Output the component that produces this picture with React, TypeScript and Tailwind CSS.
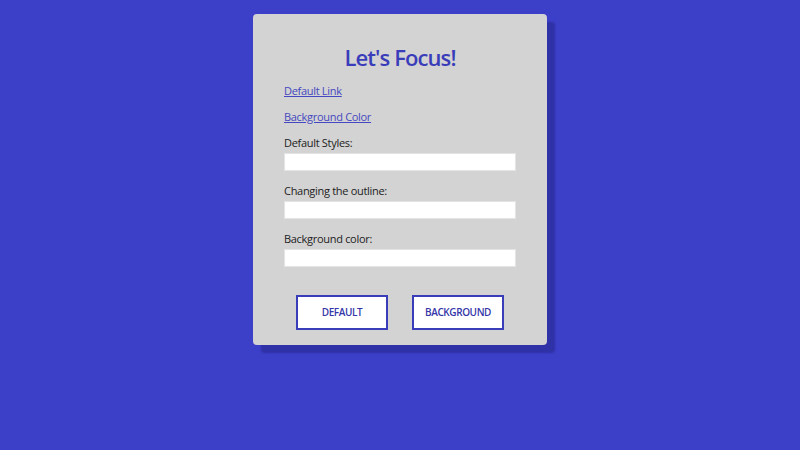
import React from "react";

const font = { fontFamily: '"Open Sans", "Noto Sans", sans-serif' };

function Field({ label }: { label: string }) {
  return (
    <div className="flex flex-col">
      <label className="text-[11px] leading-[17px] tracking-[-0.3px] text-[#222]">{label}</label>
      <input className="mt-[2px] h-[18px] w-full bg-white border border-[#e4e4e4]" />
    </div>
  );
}

export default function App() {
  return (
    <div className="min-h-[450px] w-full bg-[#3c3fc7] flex justify-center pt-[14px]" style={font}>
      <div className="w-[294px] h-[331px] bg-[#d3d3d3] rounded-[4px] shadow-[8px_8px_2px_#2f31a6] px-[31px] pt-[27px] flex flex-col">
        <h1 className="text-center text-[22px] leading-[32px] font-semibold tracking-[-0.9px] text-[#3a3db9]">
          Let's Focus!
        </h1>
        <a
          href="#"
          className="mt-[9px] text-[11px] leading-[17px] tracking-[-0.3px] text-[#4548c0] underline self-start"
        >
          Default Link
        </a>
        <a
          href="#"
          className="mt-[9px] text-[11px] leading-[17px] tracking-[-0.3px] text-[#4548c0] underline self-start"
        >
          Background Color
        </a>
        <div className="mt-[9px] flex flex-col gap-[11px]">
          <Field label="Default Styles:" />
          <Field label="Changing the outline:" />
          <Field label="Background color:" />
        </div>
        <div className="mt-[28px] flex justify-center gap-[24px]">
          <button className="w-[92px] h-[35px] bg-white border-2 border-[#3a3db9] text-[#3336a8] text-[10px] font-semibold tracking-[-0.4px] uppercase">
            Default
          </button>
          <button className="w-[92px] h-[35px] bg-white border-2 border-[#3a3db9] text-[#3336a8] text-[10px] font-semibold tracking-[-0.4px] uppercase">
            Background
          </button>
        </div>
      </div>
    </div>
  );
}
